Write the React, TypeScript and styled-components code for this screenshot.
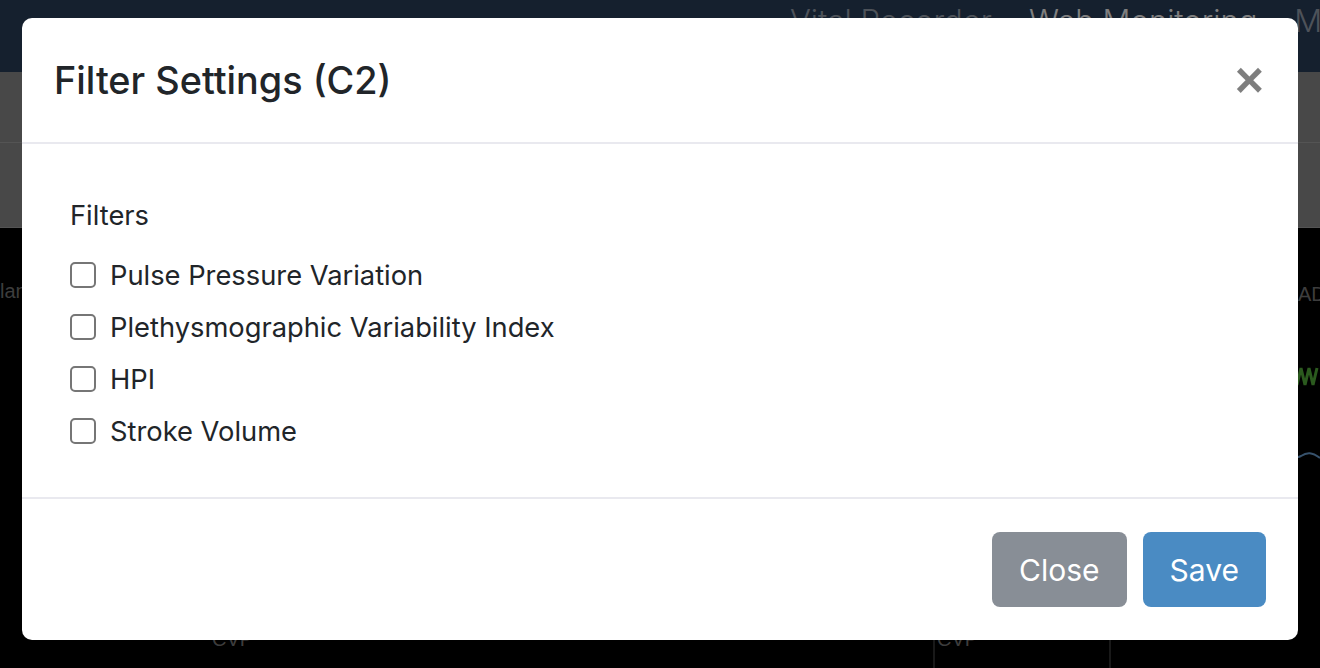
import React from "react";
import styled, { createGlobalStyle } from "styled-components";

const GlobalStyle = createGlobalStyle`
  html, body { margin: 0; padding: 0; background: #000; }
  body { font-family: Inter, "Noto Sans", "Liberation Sans", sans-serif; overflow: hidden; }
  * { box-sizing: border-box; }
`;

const Page = styled.div`
  position: relative;
  width: 1320px;
  height: 668px;
  overflow: hidden;
  background: #000;
`;

const Navbar = styled.nav`
  height: 72px;
  background: #2a405c;
  display: flex;
  align-items: flex-start;
  gap: 37px;
  padding-left: 790px;
  white-space: nowrap;
  overflow: hidden;
`;

const NavItem = styled.span<{ $active?: boolean }>`
  font-size: 31px;
  font-weight: 300;
  line-height: 34px;
  margin-top: 4px;
  color: ${(p) => (p.$active ? "#ffffff" : "rgba(255,255,255,0.55)")};
`;

const ToolBand = styled.div<{ $h: number }>`
  height: ${(p) => p.$h}px;
  background: #919191;
  border-bottom: 1px solid #a8a8a8;
`;

const Monitor = styled.div`
  height: 440px;
  display: grid;
  grid-template-columns: 933px 176px 1fr;
  grid-template-rows: 400px 40px;
`;

const Cell = styled.div<{ $line?: boolean }>`
  display: flex;
  flex-direction: column;
  border-left: ${(p) => (p.$line ? "2px solid #333" : "none")};
`;

const FaintLabel = styled.div<{ $pl?: number; $pt?: number }>`
  padding-left: ${(p) => p.$pl ?? 0}px;
  padding-top: ${(p) => p.$pt ?? 0}px;
  font-family: "Liberation Sans", sans-serif;
  font-size: 20px;
  line-height: 23px;
  color: #7a7a7a;
  white-space: nowrap;
`;

const WaveSvg = styled.svg`
  display: block;
  flex: none;
`;

const Backdrop = styled.div`
  position: absolute;
  inset: 0;
  background: rgba(0, 0, 0, 0.5);
`;

const Dialog = styled.div`
  position: absolute;
  left: 22px;
  top: 18px;
  width: 1276px;
  height: 622px;
  background: #fff;
  border-radius: 10px;
  display: flex;
  flex-direction: column;
  overflow: hidden;
`;

const Header = styled.div`
  display: flex;
  align-items: center;
  justify-content: space-between;
  padding: 32px;
  height: 126px;
  flex: none;
  border-bottom: 2px solid #e9e9ef;
`;

const Title = styled.h5`
  margin: 0;
  font-size: 37.8px;
  font-weight: 500;
  line-height: 58px;
  color: #212529;
`;

const CloseX = styled.button`
  border: 0;
  background: transparent;
  padding: 0;
  margin-right: 2px;
  font-family: "Liberation Sans", sans-serif;
  font-size: 50px;
  font-weight: 700;
  line-height: 1;
  color: #000;
  opacity: 0.5;
  cursor: pointer;
`;

const Body = styled.div`
  height: 355px;
  flex: none;
  padding: 32px;
  border-bottom: 2px solid #e9e9ef;
`;

const FieldSet = styled.fieldset`
  border: 0;
  margin: 0;
  padding: 22px 16px 0 16px;
`;

const Legend = styled.div`
  font-size: 27.3px;
  line-height: 36px;
  color: #212529;
  margin-bottom: 15px;
`;

const CheckRow = styled.label`
  display: flex;
  align-items: center;
  gap: 14px;
  height: 52px;
  font-size: 27.3px;
  color: #212529;
  cursor: pointer;
`;

const Box = styled.input`
  appearance: none;
  -webkit-appearance: none;
  margin: 0;
  width: 26px;
  height: 26px;
  border: 2px solid #767676;
  border-radius: 5px;
  background: #fff;
  flex: none;
`;

const Footer = styled.div`
  flex: 1;
  display: flex;
  justify-content: flex-end;
  align-items: flex-start;
  gap: 16px;
  padding: 33px 32px 32px 32px;
`;

const Btn = styled.button<{ $variant: "secondary" | "primary" }>`
  height: 75px;
  padding: 0 27px;
  border: 0;
  border-radius: 8px;
  font-family: Inter, "Noto Sans", sans-serif;
  font-size: 30px;
  font-weight: 400;
  color: #fff;
  background: ${(p) => (p.$variant === "primary" ? "#4a8bc3" : "#888e96")};
  cursor: pointer;
`;

const filters = [
  "Pulse Pressure Variation",
  "Plethysmographic Variability Index",
  "HPI",
  "Stroke Volume",
];

function Waves() {
  const zig: string[] = [];
  for (let x = 0; x <= 211; x += 4) {
    zig.push(`${x},${x % 8 === 0 ? 62 : 79}`);
  }
  return (
    <WaveSvg width="211" height="240" viewBox="0 0 211 240">
      <polyline points={zig.join(" ")} fill="none" stroke="#56b43c" strokeWidth="3" />
      <path
        d="M0 156 C 100 156, 180 156, 192 150 C 198 146, 203 146, 211 152"
        fill="none"
        stroke="#6ea4d8"
        strokeWidth="2"
      />
    </WaveSvg>
  );
}

export default function App() {
  return (
    <Page>
      <GlobalStyle />
      <Navbar>
        <NavItem>Vital Recorder</NavItem>
        <NavItem $active>Web Monitoring</NavItem>
        <NavItem>My Page</NavItem>
      </Navbar>
      <ToolBand $h={71} />
      <ToolBand $h={85} />
      <Monitor>
        <Cell>
          <FaintLabel $pt={52}>lan</FaintLabel>
        </Cell>
        <Cell />
        <Cell>
          <FaintLabel $pt={55} $pl={189}>ADC</FaintLabel>
          <Waves />
        </Cell>
        <Cell>
          <FaintLabel $pl={212}>CVP</FaintLabel>
        </Cell>
        <Cell $line>
          <FaintLabel $pl={2}>CVP</FaintLabel>
        </Cell>
        <Cell $line />
      </Monitor>
      <Backdrop />
      <Dialog role="dialog">
        <Header>
          <Title>Filter Settings (C2)</Title>
          <CloseX aria-label="Close">×</CloseX>
        </Header>
        <Body>
          <FieldSet>
            <Legend>Filters</Legend>
            {filters.map((f) => (
              <CheckRow key={f}>
                <Box type="checkbox" />
                <span>{f}</span>
              </CheckRow>
            ))}
          </FieldSet>
        </Body>
        <Footer>
          <Btn $variant="secondary">Close</Btn>
          <Btn $variant="primary">Save</Btn>
        </Footer>
      </Dialog>
    </Page>
  );
}
